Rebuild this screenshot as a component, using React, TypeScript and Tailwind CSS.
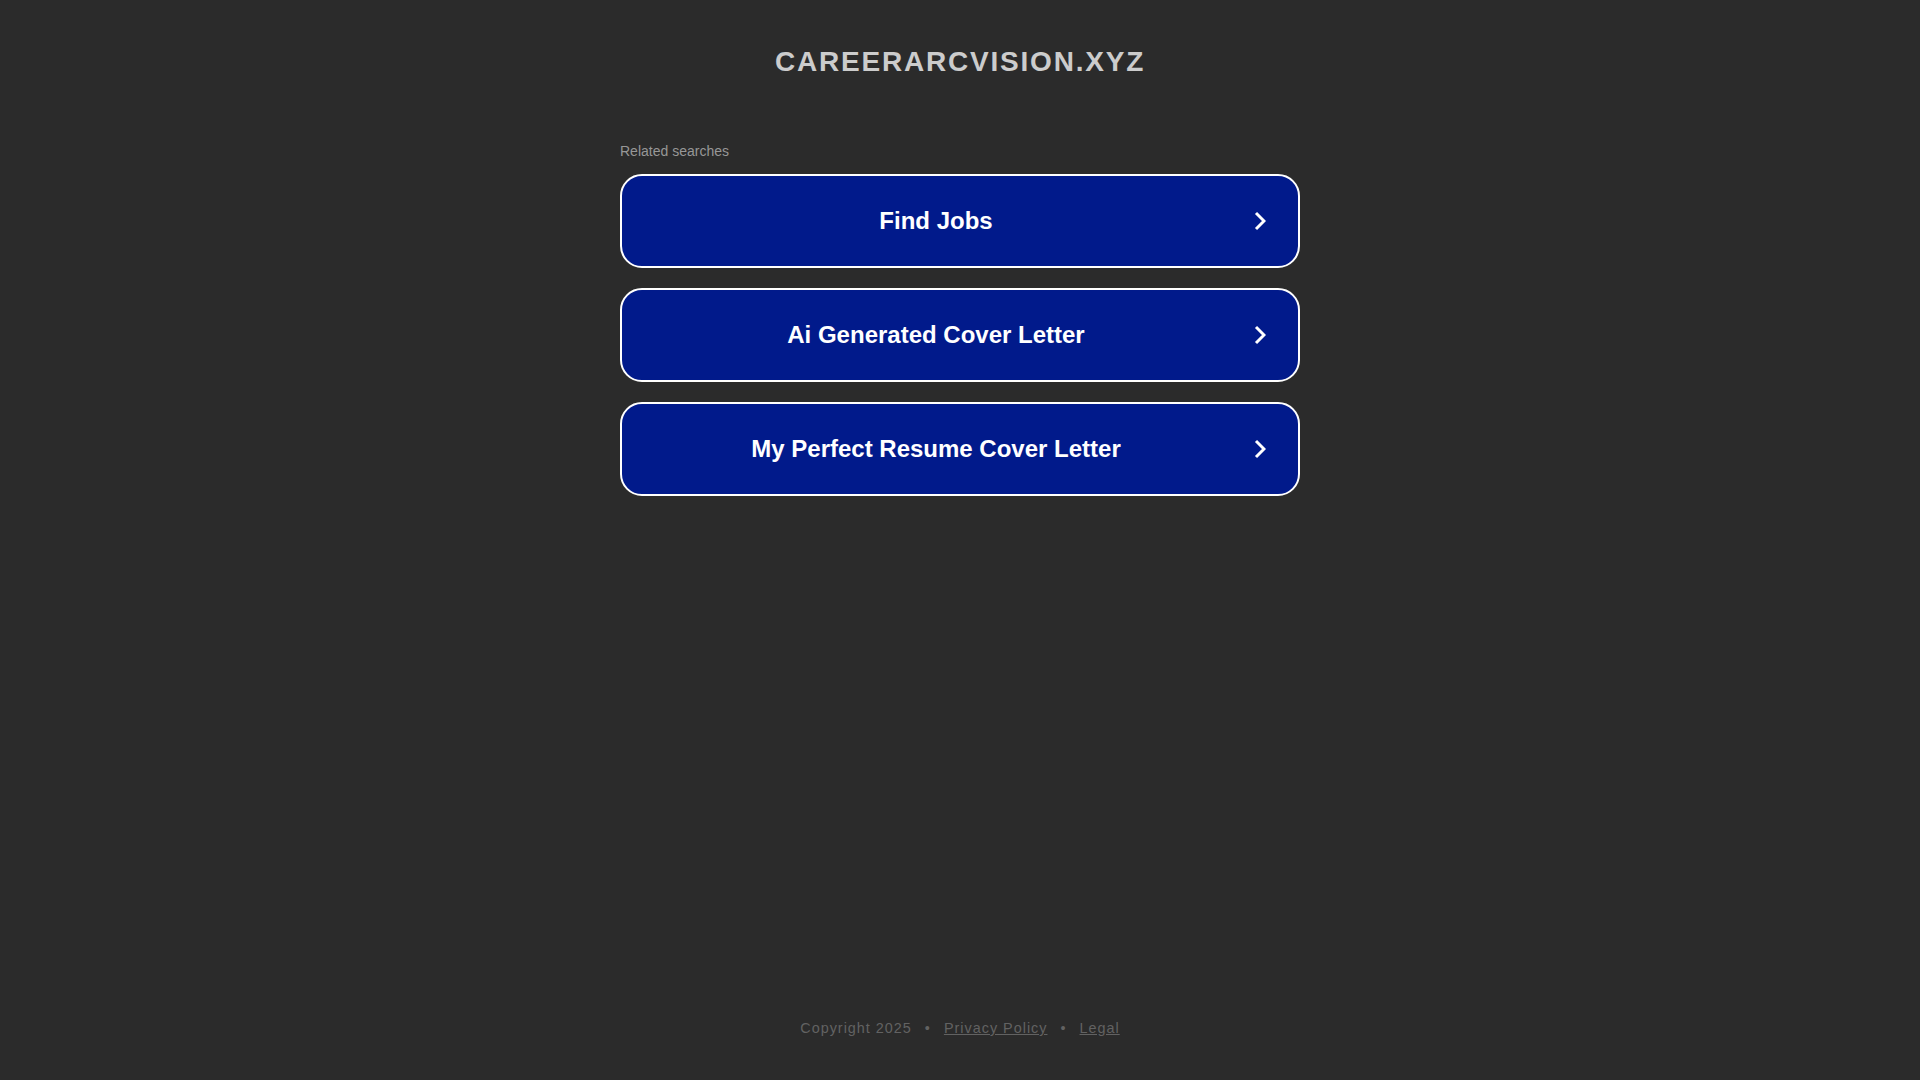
import React from "react";

const items = ["Find Jobs", "Ai Generated Cover Letter", "My Perfect Resume Cover Letter"];

function Chevron() {
  return (
    <svg width="12" height="20" viewBox="0 0 12 20" className="ml-[4px] mr-[32px] shrink-0" fill="none">
      <polyline points="2,2 10,10 2,18" stroke="#ffffff" strokeWidth="3" strokeLinecap="butt" strokeLinejoin="miter" />
    </svg>
  );
}

export default function App() {
  return (
    <div
      className="h-screen w-full bg-[#2b2b2b] flex flex-col items-center overflow-hidden"
      style={{ fontFamily: '"Liberation Sans", Arial, sans-serif' }}
    >
      <h1 className="mt-[46px] text-[28px] leading-[32px] font-bold tracking-[1.8px] text-[#cccccc]">
        CAREERARCVISION.XYZ
      </h1>
      <div className="mt-[65px] w-[680px] flex flex-col">
        <div className="text-[14px] leading-[16px] text-[#979797]">Related searches</div>
        <div className="mt-[15px] flex flex-col gap-[20px]">
          {items.map((t) => (
            <a
              key={t}
              href="#"
              className="h-[94px] flex items-center rounded-[22px] border-2 border-white bg-[#011a8b] text-white no-underline"
            >
              <span className="flex-1 text-center text-[24px] leading-[28px] font-bold">{t}</span>
              <Chevron />
            </a>
          ))}
        </div>
      </div>
      <div className="mt-auto mb-[43px] text-[14.4px] leading-[17px] tracking-[1px] text-[#626262] flex items-center">
        <span>Copyright 2025</span>
        <span className="mx-[13px]">•</span>
        <a href="#" className="underline text-[#626262]">Privacy Policy</a>
        <span className="mx-[13px]">•</span>
        <a href="#" className="underline text-[#626262]">Legal</a>
      </div>
    </div>
  );
}
